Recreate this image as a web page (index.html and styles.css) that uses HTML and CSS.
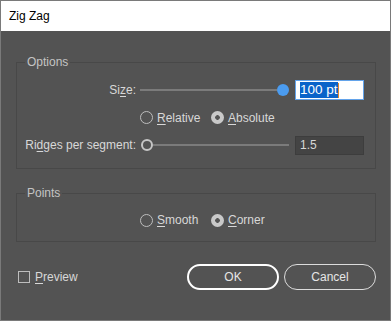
FILE: index.html
```html
<!DOCTYPE html>
<html>
<head>
<meta charset="utf-8">
<link rel="stylesheet" href="styles.css">
</head>
<body>
<div class="window">
  <div class="titlebar">Zig Zag</div>
  <div class="content">
    <fieldset class="group options">
      <legend>Options</legend>
      <div class="grid">
        <div class="label">Si<u>z</u>e:</div>
        <div class="slider">
          <div class="track"></div>
          <div class="knob knob-blue"></div>
        </div>
        <div class="field field-active"><span class="sel">100 pt</span><span class="caret"></span></div>

        <div class="radios span-row">
          <label class="radio first"><span class="dot"></span><span><u>R</u>elative</span></label>
          <label class="radio"><span class="dot on"></span><span><u>A</u>bsolute</span></label>
        </div>

        <div class="label">Ri<u>d</u>ges per segment:</div>
        <div class="slider">
          <div class="knob knob-ring"></div>
          <div class="track"></div>
        </div>
        <div class="field field-dark">1.5</div>
      </div>
    </fieldset>

    <fieldset class="group points">
      <legend>Points</legend>
      <div class="radios points-row">
        <label class="radio first"><span class="dot"></span><span><u>S</u>mooth</span></label>
        <label class="radio"><span class="dot on"></span><span><u>C</u>orner</span></label>
      </div>
    </fieldset>

    <div class="footer">
      <label class="check"><span class="box"></span><span><u>P</u>review</span></label>
      <div class="buttons">
        <button class="btn btn-default">OK</button>
        <button class="btn">Cancel</button>
      </div>
    </div>
  </div>
</div>
</body>
</html>
```

FILE: styles.css
```css
* { box-sizing: border-box; }
html, body { margin: 0; padding: 0; background: #535353; }
body {
  font-family: "Liberation Sans", Arial, sans-serif;
  font-size: 12px;
  color: #d8d8d8;
}
.window {
  width: 391px;
  height: 321px;
  border: 1px solid #7a7a7a;
  background: #535353;
  display: flex;
  flex-direction: column;
}
.titlebar {
  height: 30px;
  flex: none;
  background: #ffffff;
  color: #000;
  padding-left: 8px;
  display: flex;
  align-items: center;
  font-size: 12px;
}
.content {
  padding: 24px 14px 0 15px;
  display: flex;
  flex-direction: column;
}
u { text-decoration-thickness: 1px; text-underline-offset: 2px; }
.group {
  margin: 0;
  padding: 0;
  border: 1px solid #484848;
  min-width: 0;
}
.group legend {
  margin-left: 8px;
  padding: 0 2px;
  line-height: 14px;
  color: #c4c4c4;
}
.options .grid {
  display: grid;
  grid-template-columns: 119px 149px 71px;
  column-gap: 4px;
  grid-template-rows: 20px 35px 20px;
  padding: 11px 0 13px;
  align-items: center;
}
.options .grid > .field { margin-left: 2px; }
.label {
  text-align: right;
  line-height: 14px;
}
.slider {
  height: 12px;
  display: flex;
  align-items: center;
}
.track {
  flex: 1;
  height: 2px;
  background: #7b7b7b;
}
.knob {
  width: 12px;
  height: 12px;
  border-radius: 50%;
  flex: none;
}
.knob-blue { background: #4b9cf0; }
.knob-ring {
  border: 2px solid #c6c6c6;
  margin-left: 1px;
}
.field {
  height: 20px;
  padding: 0 4px;
  display: flex;
  align-items: center;
  line-height: 14px;
}
.field-active {
  background: #ffffff;
  border: 1px solid #63a3ea;
  color: #fff;
  font-size: 13.5px;
}
.field-active .sel {
  background: #0a63c9;
  padding: 1px 0;
}
.caret {
  width: 1px;
  height: 15px;
  background: #e4892a;
}
.field-dark {
  background: #444444;
  border: 1px solid #3d3d3d;
  color: #d8d8d8;
  height: 19px;
}
.span-row { grid-column: 2 / 4; }
.radios {
  display: flex;
  align-items: center;
}
.radio {
  display: flex;
  align-items: center;
  gap: 4px;
}
.radio.first { width: 71px; }
.dot {
  width: 13px;
  height: 13px;
  border-radius: 50%;
  border: 1.5px solid #bdbdbd;
  flex: none;
}
.dot.on {
  border: none;
  background: radial-gradient(circle, #555 0 2px, #c9c9c9 2.6px);
}
.points-row {
  padding: 12px 0 13px 123px;
  height: 41px;
}
.points { margin-top: 17px; }
.footer {
  margin-top: 22px;
  display: flex;
  align-items: center;
  justify-content: space-between;
}
.check {
  display: flex;
  align-items: center;
  gap: 5px;
  margin-left: 2px;
}
.box {
  width: 12px;
  height: 12px;
  border: 1px solid #bdbdbd;
}
.buttons {
  display: flex;
  gap: 5px;
}
.btn {
  width: 92px;
  height: 26px;
  border-radius: 13px;
  background: transparent;
  border: 1.5px solid #dcdcdc;
  color: #e6e6e6;
  font-family: "Liberation Sans", Arial, sans-serif;
  font-size: 12px;
  padding: 0;
}
.btn-default {
  border: 2px solid #ffffff;
}
```
